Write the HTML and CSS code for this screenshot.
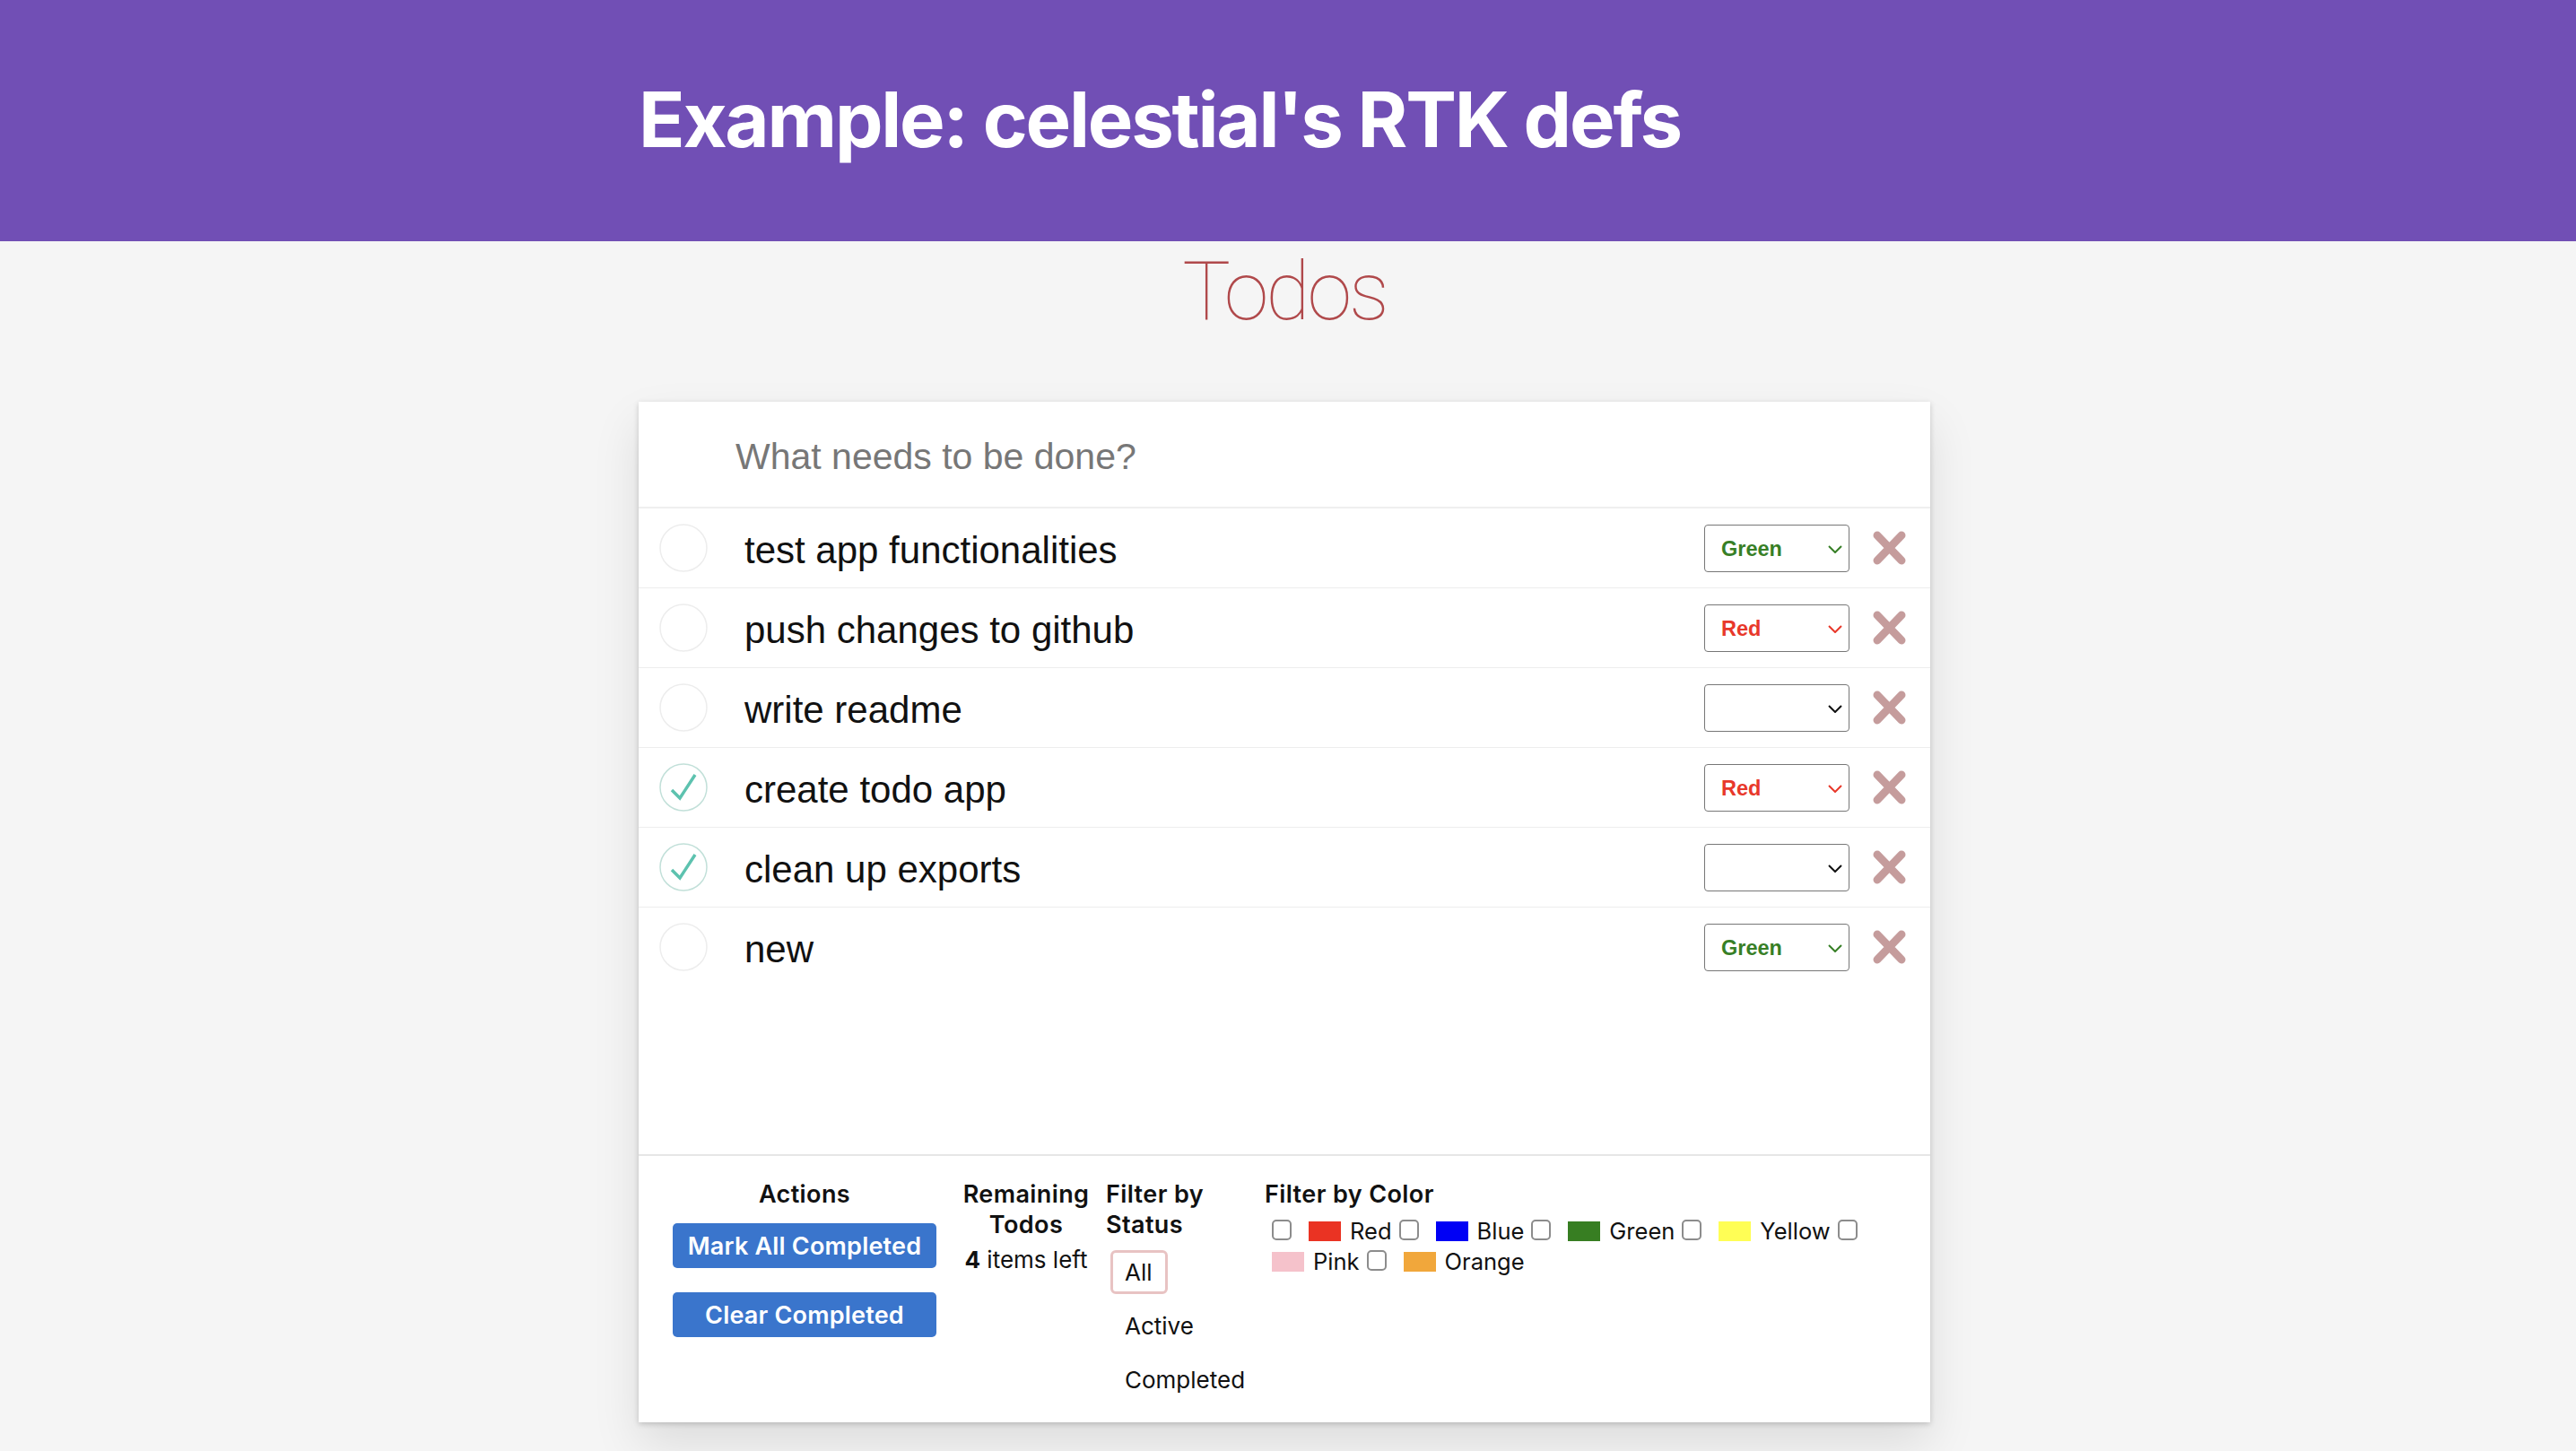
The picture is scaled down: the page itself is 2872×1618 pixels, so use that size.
FILE: index.html
```html
<!DOCTYPE html>
<html lang="en">
<head>
<meta charset="utf-8">
<title>Example: celestial's RTK defs</title>
<link rel="stylesheet" href="styles.css">
</head>
<body>
<header class="topbar">
  <div class="wrap">
    <h1 class="site-title">Example: celestial's RTK defs</h1>
  </div>
</header>
<main class="wrap">
  <h2 class="app-title">Todos</h2>
  <section class="todoapp">
    <div class="new-todo">
      <input class="new-todo-input" type="text" placeholder="What needs to be done?">
    </div>
    <ul class="todo-list">
      <li class="todo">
        <svg class="toggle" viewBox="0 0 54 54"><circle cx="27" cy="27" r="26" class="ring"/></svg>
        <span class="todo-text">test app functionalities</span>
        <div class="color-select color-select--green"><span class="sel-text">Green</span><svg class="chev" viewBox="0 0 16 9"><polyline points="1,1 8,8 15,1"/></svg></div>
        <svg class="destroy" viewBox="0 0 37 38"><path d="M5 5 L32 33 M32 5 L5 33"/></svg>
      </li>
      <li class="todo">
        <svg class="toggle" viewBox="0 0 54 54"><circle cx="27" cy="27" r="26" class="ring"/></svg>
        <span class="todo-text">push changes to github</span>
        <div class="color-select color-select--red"><span class="sel-text">Red</span><svg class="chev" viewBox="0 0 16 9"><polyline points="1,1 8,8 15,1"/></svg></div>
        <svg class="destroy" viewBox="0 0 37 38"><path d="M5 5 L32 33 M32 5 L5 33"/></svg>
      </li>
      <li class="todo">
        <svg class="toggle" viewBox="0 0 54 54"><circle cx="27" cy="27" r="26" class="ring"/></svg>
        <span class="todo-text">write readme</span>
        <div class="color-select"><span class="sel-text"></span><svg class="chev" viewBox="0 0 16 9"><polyline points="1,1 8,8 15,1"/></svg></div>
        <svg class="destroy" viewBox="0 0 37 38"><path d="M5 5 L32 33 M32 5 L5 33"/></svg>
      </li>
      <li class="todo">
        <svg class="toggle toggle--done" viewBox="0 0 54 54"><circle cx="27" cy="27" r="26" class="ring"/><path class="tick" d="M14 30 L23 39 L40 13"/></svg>
        <span class="todo-text">create todo app</span>
        <div class="color-select color-select--red"><span class="sel-text">Red</span><svg class="chev" viewBox="0 0 16 9"><polyline points="1,1 8,8 15,1"/></svg></div>
        <svg class="destroy" viewBox="0 0 37 38"><path d="M5 5 L32 33 M32 5 L5 33"/></svg>
      </li>
      <li class="todo">
        <svg class="toggle toggle--done" viewBox="0 0 54 54"><circle cx="27" cy="27" r="26" class="ring"/><path class="tick" d="M14 30 L23 39 L40 13"/></svg>
        <span class="todo-text">clean up exports</span>
        <div class="color-select"><span class="sel-text"></span><svg class="chev" viewBox="0 0 16 9"><polyline points="1,1 8,8 15,1"/></svg></div>
        <svg class="destroy" viewBox="0 0 37 38"><path d="M5 5 L32 33 M32 5 L5 33"/></svg>
      </li>
      <li class="todo">
        <svg class="toggle" viewBox="0 0 54 54"><circle cx="27" cy="27" r="26" class="ring"/></svg>
        <span class="todo-text">new</span>
        <div class="color-select color-select--green"><span class="sel-text">Green</span><svg class="chev" viewBox="0 0 16 9"><polyline points="1,1 8,8 15,1"/></svg></div>
        <svg class="destroy" viewBox="0 0 37 38"><path d="M5 5 L32 33 M32 5 L5 33"/></svg>
      </li>
    </ul>
    <footer class="footer">
      <div class="col col-actions">
        <h5 class="col-title">Actions</h5>
        <button class="btn">Mark All Completed</button>
        <button class="btn">Clear Completed</button>
      </div>
      <div class="col col-remaining">
        <h5 class="col-title">Remaining Todos</h5>
        <div class="count"><strong>4</strong> items left</div>
      </div>
      <div class="col col-status">
        <h5 class="col-title">Filter by Status</h5>
        <ul class="filters">
          <li><span class="filter filter--selected">All</span></li>
          <li><span class="filter">Active</span></li>
          <li><span class="filter">Completed</span></li>
        </ul>
      </div>
      <div class="col col-colors">
        <h5 class="col-title">Filter by Color</h5>
        <div class="color-list">
          <input class="cb" type="checkbox"><span class="color-opt"><span class="swatch swatch--red"></span>Red</span>
          <input class="cb" type="checkbox"><span class="color-opt"><span class="swatch swatch--blue"></span>Blue</span>
          <input class="cb" type="checkbox"><span class="color-opt"><span class="swatch swatch--green"></span>Green</span>
          <input class="cb" type="checkbox"><span class="color-opt"><span class="swatch swatch--yellow"></span>Yellow</span>
          <input class="cb" type="checkbox"><span class="color-opt"><span class="swatch swatch--pink"></span>Pink</span>
          <input class="cb" type="checkbox"><span class="color-opt"><span class="swatch swatch--orange"></span>Orange</span>
        </div>
      </div>
    </footer>
  </section>
</main>
</body>
</html>
```
FILE: styles.css
```css
* { box-sizing: border-box; }
html, body { margin: 0; padding: 0; }
body {
  background: #f5f5f5;
  font-family: Inter, "Noto Sans", sans-serif;
  color: #111;
  height: 1618px;
  overflow: hidden;
}
.wrap {
  width: 1440px;
  margin-left: 712px;
}
.topbar {
  background: #714fb5;
  height: 269px;
  padding-top: 91px;
}
.site-title {
  margin: 0;
  font-family: Inter, sans-serif;
  font-weight: 700;
  font-size: 85px;
  line-height: 1;
  color: #fff;
  letter-spacing: -2.2px;
}
.app-title {
  margin: 12px 0 77px;
  text-align: center;
  font-family: Roboto, "Liberation Sans", sans-serif;
  font-weight: 100;
  font-size: 90px;
  line-height: 1;
  color: #b0494b;
  letter-spacing: -3px;
}
.todoapp {
  background: #fff;
  height: 1138px;
  box-shadow: 0 2px 6px 0 rgba(0,0,0,0.18), 0 25px 50px 0 rgba(0,0,0,0.1);
  display: flex;
  flex-direction: column;
}
.new-todo {
  height: 119px;
  border-bottom: 2px solid #efefef;
  padding: 6px 0 0 108px;
  display: flex;
  align-items: center;
}
.new-todo-input {
  border: 0;
  outline: 0;
  background: transparent;
  font-family: "Liberation Sans", Arial, sans-serif;
  font-size: 41px;
  width: 100%;
  padding: 0;
  color: #333;
}
.new-todo-input::placeholder { color: #777; }
.todo-list {
  list-style: none;
  margin: 0;
  padding: 0;
  height: 720px;
}
.todo {
  height: 89px;
  border-bottom: 1px solid #ededed;
  display: flex;
  align-items: center;
  padding: 0 27px 0 23px;
}
.todo:last-child { border-bottom: 0; height: 88px; }
.toggle { width: 54px; height: 54px; flex: none; }
.toggle .ring { fill: none; stroke: #ededed; stroke-width: 1.5; }
.toggle--done .ring { stroke: #c2e0d9; }
.tick { fill: none; stroke: #5dc2af; stroke-width: 3.5; }
.todo-text {
  flex: 1;
  margin-left: 41px;
  padding-top: 6px;
  font-family: "Liberation Sans", Arial, sans-serif;
  font-size: 42px;
  color: #111;
}
.color-select {
  width: 162px;
  height: 53px;
  border: 1.5px solid #777;
  border-radius: 4px;
  display: flex;
  align-items: center;
  padding: 2px 7px 0 18px;
  color: #111;
  font-family: "Liberation Sans", Arial, sans-serif;
  font-weight: 700;
  font-size: 23.5px;
}
.color-select--green { color: #377f26; }
.color-select--red { color: #e8382a; }
.sel-text { flex: 1; }
.chev { width: 16px; height: 9px; fill: none; stroke: currentColor; stroke-width: 2; }
.destroy {
  width: 37px;
  height: 38px;
  margin-left: 26px;
  flex: none;
}
.destroy path { stroke: #c59c9c; stroke-width: 9; stroke-linecap: round; fill: none; }

.footer {
  flex: 1;
  border-top: 2px solid #e6e6e6;
  padding: 26px 38px 0;
  display: flex;
  align-items: flex-start;
}
.col-title {
  margin: 0;
  font-size: 27px;
  font-weight: 600;
  line-height: 34px;
  color: #111;
  letter-spacing: 0.4px;
}
.col-actions {
  width: 294px;
  text-align: center;
  display: flex;
  flex-direction: column;
}
.btn {
  height: 50px;
  border: 0;
  border-radius: 5px;
  background: #3a75cc;
  color: #fff;
  font-family: Inter, sans-serif;
  font-weight: 600;
  font-size: 27px;
  letter-spacing: 0.2px;
  margin-top: 15px;
  padding: 0;
}
.btn + .btn { margin-top: 27px; }
.col-remaining {
  width: 146px;
  margin-left: 27px;
  text-align: center;
}
.count {
  margin-top: 5px;
  font-size: 26px;
  line-height: 34px;
}
.count strong { font-weight: 700; }
.col-status {
  width: 160px;
  margin-left: 16px;
}
.filters {
  list-style: none;
  margin: 11px 0 0;
  padding: 0 0 0 5px;
  display: flex;
  flex-direction: column;
  align-items: flex-start;
  gap: 11px;
}
.filter {
  display: block;
  border: 3px solid transparent;
  border-radius: 6px;
  padding: 4.5px 14px 4.5px 13px;
  font-size: 26px;
  line-height: 34px;
  color: #111;
}
.filter--selected { border-color: #e8c3c3; }
.col-colors {
  flex: 1;
  margin-left: 17px;
}
.color-list {
  margin-top: 7px;
  padding-left: 8px;
  display: flex;
  flex-wrap: wrap;
  align-items: center;
  font-size: 25.5px;
  line-height: 34px;
}
.cb {
  -webkit-appearance: none;
  appearance: none;
  width: 22px;
  height: 23px;
  margin: 0 19px 3px 0;
  border: 2px solid #8c8c8c;
  border-radius: 5px;
  background: #fff;
}
.color-opt {
  display: flex;
  align-items: center;
  margin-right: 8px;
  white-space: nowrap;
}
.swatch {
  width: 36px;
  height: 22px;
  margin-right: 10px;
}
.swatch--red { background: #ea3323; }
.swatch--blue { background: #0000f5; }
.swatch--green { background: #377e22; }
.swatch--yellow { background: #fffe55; }
.swatch--pink { background: #f5c2cb; }
.swatch--orange { background: #f1a73b; }
```
